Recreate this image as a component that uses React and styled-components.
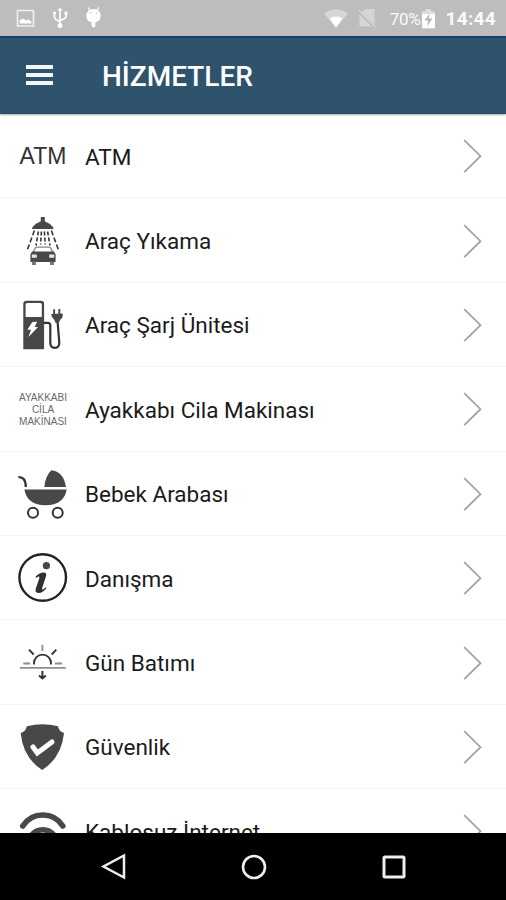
import React from "react";
import styled, { createGlobalStyle } from "styled-components";

const Global = createGlobalStyle`
  * { box-sizing: border-box; }
  body { margin: 0; background: #fff; font-family: Roboto, "Noto Sans", sans-serif; }
`;
const Screen = styled.div`
  width: 506px;
  height: 900px;
  display: flex;
  flex-direction: column;
  overflow: hidden;
  background: #fff;
`;
const StatusBar = styled.div`
  height: 36px;
  flex: none;
  display: flex;
  align-items: center;
  justify-content: space-between;
  padding: 0 10px 0 16px;
  background: #bdbdbd;
  color: #fafafa;
`;
const StatusGroup = styled.div`
  display: flex;
  align-items: center;
  height: 36px;
`;
const Battery = styled.span`
  font-size: 17px;
  letter-spacing: -0.3px;
  margin-left: 13px;
  padding-top: 1px;
`;
const Clock = styled.span`
  font-size: 19px;
  font-weight: 700;
  letter-spacing: 0.3px;
  margin-left: 10px;
  padding-top: 1px;
`;
const Header = styled.header`
  height: 78px;
  flex: none;
  display: flex;
  align-items: center;
  padding-left: 26px;
  background: #30536d;
  border-top: 2px solid #174569;
  border-bottom: 1px solid #294a62;
  box-shadow: 0 1px 2px rgba(0, 0, 0, 0.35);
  z-index: 1;
`;
const Menu = styled.button`
  border: 0;
  padding: 0;
  background: none;
  width: 28px;
  height: 20px;
  margin-top: -1px;
  display: flex;
  flex-direction: column;
  justify-content: space-between;
`;
const MenuBar = styled.span`
  display: block;
  width: 27px;
  height: 4px;
  background: #f3f5f7;
`;
const Title = styled.h1`
  margin: 2px 0 0 48px;
  font-size: 28px;
  font-weight: 500;
  line-height: 36px;
  color: #fff;
`;
const List = styled.ul`
  flex: 1;
  min-height: 0;
  margin: 0;
  padding: 0;
  list-style: none;
  overflow: hidden;
`;
const Row = styled.li`
  height: 84.4px;
  display: flex;
  align-items: center;
  padding: 1px 23px 0 18px;
  border-bottom: 1px solid #f4f4f4;
`;
const IconBox = styled.div`
  width: 50px;
  height: 50px;
  flex: none;
  display: flex;
  align-items: center;
  justify-content: center;
  text-align: center;
  white-space: pre;
  color: ${(p) => (p.$small ? "#686868" : "#333")};
  font-family: "Liberation Sans", sans-serif;
  font-size: ${(p) => (p.$small ? 10 : 23)}px;
  line-height: ${(p) => (p.$small ? 12 : 26)}px;
  padding-top: ${(p) => (p.$small ? 1 : 0)}px;
`;
const Label = styled.span`
  flex: 1;
  margin: 1px 0 0 17px;
  font-size: 22.5px;
  line-height: 30px;
  color: #1b1b1b;
  white-space: nowrap;
`;
const NavBar = styled.nav`
  height: 67px;
  flex: none;
  display: flex;
  justify-content: center;
  gap: 112px;
  padding: 20px 0 0 1px;
  background: #000;
`;
const Svg = styled.svg`
  display: block;
  flex: none;
  overflow: visible;
`;
const Line = styled.g`
  fill: none;
  stroke: ${(p) => p.$color || "#333"};
  stroke-width: ${(p) => p.$w || 2};
`;

const Icon = ({ children }) => (
  <Svg width="50" height="50" viewBox="0 0.5 50 50" fill="#484848">{children}</Svg>
);

const CarWash = () => (
  <Icon>
    <path d="M22.8 1.6h4v4.2l5.2 2.6 3.4 3.6v1.6H14.2V12l3.4-3.6 5.2-2.6z" />
    <Line $w={1.6} strokeDasharray="5 2.5">
      <path d="M16.4 15 9.5 34M33.4 15l6.9 19" />
      <path d="m20.4 16-2.4 14M23.4 16l-.8 13M26.4 16l.8 13M29.6 16 32 30" strokeDasharray="4 2" />
    </Line>
    <path d="m15 37 2.3-4.4q.5-1 1.7-1h12q1.2 0 1.7 1L35 37" fill="#fff" stroke="#888" strokeWidth="1.3" />
    <path d="M14 36h22l1.6 3v7.5H12.4V39z" />
    <path d="M14 46h4v3.4h-4zM32 46h4v3.4h-4z" fill="#777" />
    <path d="M13.8 39h5v3.3h-5zM31.2 39h5v3.3h-5z" fill="#e8e8e8" />
  </Icon>
);
const Charger = () => (
  <Icon>
    <path fillRule="evenodd" d="M5.3 49.8V4.5q0-3.3 3.3-3.3h14.2q3.3 0 3.3 3.3v45.3zM7.6 17.6h16.2V5q0-1.5-1.5-1.500H9.1Q7.6 3.5 7.6 5z" />
    <path d="m14.3 22.5 4.8-.2-2.4 5.3h3.3l-9.5 9.8 2.5-7.2H9.3z" fill="#fff" />
    <Line $w={2.2}><path d="M26 23.3h3.8q2.500 0 2.500 2.500v17.500q0 5 4.500 5t4.500-5L39.400 20" /></Line>
    <path d="m33.2 14.5 11.4-.6q.8 4-2.2 6.2l-1.6 3.2h-3.300L36.100 20q-2.800-1.800-2.900-5.500z" />
    <path d="M35.2 9.8h1.9v5h-1.9zM40.4 9.5h1.9v5h-1.9z" />
  </Icon>
);
const Pram = () => (
  <Icon>
    <Line $w={2.3}><path d="M.4 8.6Q7.6 8 7.8 18.4" /></Line>
    <path d="M26.3 18.5Q27.5 7 33.4 1.7 45.5 2.8 48 18.5zM6.4 21h42.3Q46 36.7 27.5 36.7T6.4 21z" />
    <Line $w={2}><circle cx="15" cy="44.3" r="5" /><circle cx="39.7" cy="44.3" r="5" /></Line>
  </Icon>
);
const Info = () => (
  <Icon>
    <Line $w={2.4} $color="#222"><circle cx="24.7" cy="25" r="23.3" /></Line>
    <circle cx="28.4" cy="13.2" r="3.6" />
    <path d="M17.5 24.5q3.5-4.8 8.8-4.6 2.8.3 1.6 4.2l-3.7 11.2q-.6 2 .8 1.6 1-.3 2.5-2.2l.9.7q-3.6 5.2-8.1 5.1-3.9-.2-2.3-5l3.2-9.5q.7-2.3-.7-2-.8.2-2.1 1.4z" fill="#303030" />
  </Icon>
);
const Sunset = () => (
  <Icon>
    <Line $w={1.8} $color="#8e8e8e"><path d="M2 30.300h45.700M5.300 26H12M37 26h7M24.400 7.200v6.400" /></Line>
    <Line $w={1.9}><path d="M16 27v-1.400a8.500 8.500 0 0 1 17 0V27M11 12.200l4.700 4.800M38.300 12.200 33.700 17" /></Line>
    <Line $w={2}><path d="M24.400 33.500v7M21 38l3.400 3 3.400-3" /></Line>
  </Icon>
);
const Shield = () => (
  <Icon>
    <path d="M8.8 4.700Q24.400.9 40 4.700q.6 4.800 6 6.900-2.400 24.500-21.800 36.900Q4.800 36.100 2.700 11.600q5.400-2.100 6.100-6.900z" />
    <path d="m15 25.5 4.300 6L34 20.500" fill="none" stroke="#fff" strokeWidth="5" strokeLinecap="round" strokeLinejoin="miter" />
  </Icon>
);
const Wifi = () => (
  <Icon>
    <Line $w={5.6} $color="#484848" strokeLinecap="round">
      <path d="M4.800 20.500a23.700 23.700 0 0 1 40 0M13 30.500a14.200 14.200 0 0 1 23.600 0" />
    </Line>
  </Icon>
);
const Chevron = () => (
  <Svg width="20" height="34" viewBox="0 0 20 34">
    <Line $w={1.8} $color="#a3a3a3"><path d="M1.200 1.200 17.500 17.200 1.200 33.200" /></Line>
  </Svg>
);

const services = [
  { label: "ATM", text: "ATM" },
  { label: "Araç Yıkama", icon: CarWash },
  { label: "Araç Şarj Ünitesi", icon: Charger },
  { label: "Ayakkabı Cila Makinası", text: "AYAKKABI\nCİLA\nMAKİNASI", small: true },
  { label: "Bebek Arabası", icon: Pram },
  { label: "Danışma", icon: Info },
  { label: "Gün Batımı", icon: Sunset },
  { label: "Güvenlik", icon: Shield },
  { label: "Kablosuz İnternet", icon: Wifi },
];

export default function App() {
  return (
    <Screen>
      <Global />
      <StatusBar>
        <StatusGroup>
          <Svg width="19" height="19" viewBox="0 0 19 19">
            <Line $w={1.6} $color="#f1f1f1"><path d="M1.500 1.500h16v15.500h-16z" /></Line>
            <path d="M3.500 14.500v-3l3.500-2 3 2 2-1.300 3.500 2.300v2z" fill="#fff" />
          </Svg>
          <Svg width="34" height="22" viewBox="0 0 34 22">
            <Line $w={1.7} $color="#fff"><path d="M25 2v17M19.500 6v4.500q0 2 5.500 4M31 6v3.500q0 2-6 4" /></Line>
            <g fill="#fff"><circle cx="25" cy="18.500" r="2.500" /><circle cx="19.500" cy="6" r="1.600" /><path d="M29.500 4.500h3v3h-3zM22.500 3.700 25 .2l2.500 3.500z" /></g>
          </Svg>
          <Svg width="34" height="22" viewBox="0 0 34 22">
            <path d="M19.300 0l2 2.800Q24.500 1 27.700 2.800L29.500 0l.8.500L29 3.500q2.700 1.800 2.700 5.300 0 5.800-5.300 6.500v3.500q-.2 1.700-1.900 1.700t-1.900-1.700v-3.500q-5.300-.8-5.300-6.500 0-3.500 2.700-5.300L18.500.5z" fill="#fff" />
            <circle cx="21.500" cy="6" r=".8" fill="#bdbdbd" /><circle cx="27.500" cy="6" r=".8" fill="#bdbdbd" />
          </Svg>
        </StatusGroup>
        <StatusGroup>
          <Svg width="24" height="19" viewBox="0 0 24 19">
            <path d="M0 4.500Q12-4 24 4.500L12 19z" fill="#d5d5d5" /><path d="M5.500 9.500q6.500-4 13 0L12 18.500z" fill="#fff" />
          </Svg>
          <Svg width="29" height="20" viewBox="0 0 29 20">
            <path d="M17.500 1h9v15.500L13.800 4.600zM11.500 6.500 23.800 18.500H11.500z" fill="#d5d5d5" /><path d="m10.500 2 17 17" stroke="#d5d5d5" strokeWidth="1.500" />
          </Svg>
          <Battery>70%</Battery>
          <Svg width="15" height="21" viewBox="0 0 15 21">
            <path d="M1 6.500V3.500h3.300V1h5.700v2.500h4v3z" fill="#dedede" /><path d="M1 6h13v14.300H1z" fill="#fff" />
            <path d="M8.700 5.500 3.500 12.600h3.700l-1 5.600 5.300-7.600H7.800z" fill="#b5b5b5" />
          </Svg>
          <Clock>14:44</Clock>
        </StatusGroup>
      </StatusBar>
      <Header>
        <Menu aria-label="Menü"><MenuBar /><MenuBar /><MenuBar /></Menu>
        <Title>HİZMETLER</Title>
      </Header>
      <List>
        {services.map(({ label, text, small, icon: Glyph }) => (
          <Row key={label}>
            <IconBox $small={small}>{Glyph ? <Glyph /> : text}</IconBox>
            <Label>{label}</Label>
            <Chevron />
          </Row>
        ))}
      </List>
      <NavBar>
        <Svg width="28" height="28" viewBox="0 0 28 28">
          <Line $w={2.5} $color="#eee"><path d="M24 2.500v22L3.500 13.500z" /></Line>
        </Svg>
        <Svg width="28" height="28" viewBox="0 0 28 28">
          <Line $w={2.6} $color="#eee"><circle cx="14" cy="14" r="11" /></Line>
        </Svg>
        <Svg width="28" height="28" viewBox="0 0 28 28">
          <Line $w={3} $color="#eee"><rect x="4" y="4" width="20" height="20" rx="1" /></Line>
        </Svg>
      </NavBar>
    </Screen>
  );
}
